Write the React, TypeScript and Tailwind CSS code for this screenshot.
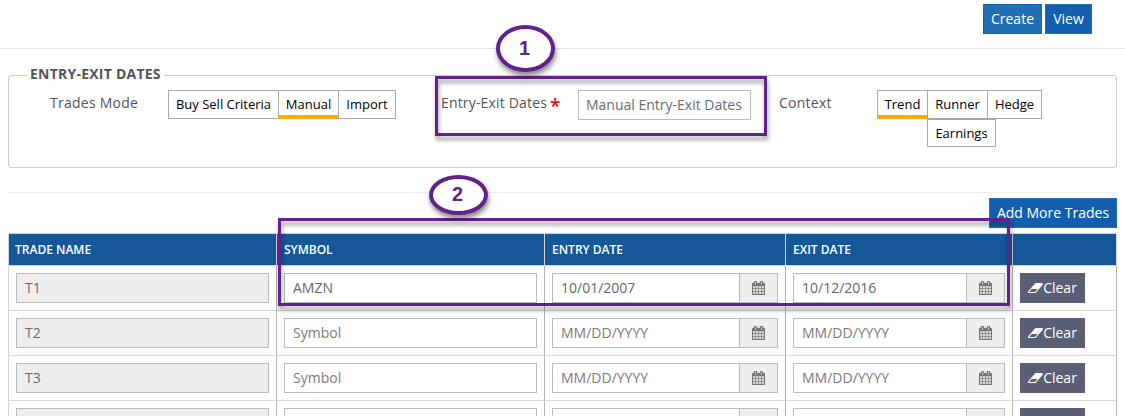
import React from "react";

function CalendarIcon() {
  return (
    <svg viewBox="0 0 1664 1792" className="h-[14px] w-[13px]" fill="#777777" stroke="#777777" strokeWidth="36">
      <path d="M128 1664h288v-288h-288v288zm352 0h320v-288h-320v288zm-352-352h288v-320h-288v320zm352 0h320v-320h-320v320zm-352-384h288v-288h-288v288zm736 736h320v-288h-320v288zm-384-736h320v-288h-320v288zm768 736h288v-288h-288v288zm-384-352h320v-320h-320v320zm-352-864v-288q0-13-9.5-22.5t-22.5-9.5h-64q-13 0-22.5 9.5t-9.5 22.5v288q0 13 9.5 22.5t22.5 9.5h64q13 0 22.5-9.5t9.5-22.5zm736 864h288v-320h-288v320zm-384-384h320v-288h-320v288zm384 0h288v-288h-288v288zm32-480v-288q0-13-9.5-22.5t-22.5-9.5h-64q-13 0-22.5 9.5t-9.5 22.5v288q0 13 9.5 22.5t22.5 9.5h64q13 0 22.5-9.5t9.5-22.5zm384-64v1280q0 52-38 90t-90 38h-1408q-52 0-90-38t-38-90v-1280q0-52 38-90t90-38h128v-96q0-66 47-113t113-47h64q66 0 113 47t47 113v96h384v-96q0-66 47-113t113-47h64q66 0 113 47t47 113v96h128q52 0 90 38t38 90z" />
    </svg>
  );
}

function EraserIcon() {
  return (
    <svg viewBox="0 0 1920 1792" className="h-[14px] w-[15px]" fill="#ffffff">
      <path d="M896 1408l336-384h-768l-336 384h768zm1013-1077q15 34 9.5 71.5t-30.5 65.5l-896 1024q-38 44-96 44h-768q-38 0-69.5-20.5t-47.5-54.5q-15-34-9.5-71.5t30.5-65.5l896-1024q38-44 96-44h768q38 0 69.5 20.5t47.5 54.5z" />
    </svg>
  );
}

function Segment({ label, active, className }: { label: string; active?: boolean; className: string }) {
  return (
    <button
      className={`flex shrink-0 justify-center whitespace-nowrap border border-[#a9a9a9] bg-white pt-[4px] text-[13px] leading-[19px] text-black ${
        active ? "border-b-4 border-b-[#ffab00]" : ""
      } ${className}`}
    >
      {label}
    </button>
  );
}

function DateField({ value, placeholder }: { value: string; placeholder: string }) {
  return (
    <div className="flex h-[30px] border border-[#bababa] bg-white">
      <span className={`flex-1 pl-2 leading-7 ${value ? "text-[#666]" : "text-[#7b7b7b]"}`}>
        {value || placeholder}
      </span>
      <span className="flex w-[38px] items-center justify-center border-l border-[#bababa] bg-[#eee]">
        <CalendarIcon />
      </span>
    </div>
  );
}

const rows = [
  { name: "T1", symbol: "AMZN", entry: "10/01/2007", exit: "10/12/2016" },
  { name: "T2", symbol: "", entry: "", exit: "" },
  { name: "T3", symbol: "", entry: "", exit: "" },
];

const columns = "grid grid-cols-[268px_268px_241px_227px_104px]";
const cell = "h-[45px] border-r border-b border-r-[#b0b2b5] border-b-[#d9d9d9] px-[7px] pt-[7px]";
const headers = ["TRADE NAME", "SYMBOL", "ENTRY DATE", "EXIT DATE", ""];

export default function App() {
  return (
    <div className="relative h-[416px] w-[1125px] overflow-hidden bg-white font-['Open_Sans',sans-serif] text-[14px] leading-5 text-[#555]">
      <header className="flex h-[49px] gap-[3px] border-b border-[#e5e5e5] pt-1 pl-[983px] text-white">
        <button className="h-[30px] w-[59px] border border-[#135fab] bg-[#1f6fb2]">Create</button>
        <button className="h-[30px] w-[47px] border border-[#1f6fb2] bg-[#135fae]">View</button>
      </header>

      <fieldset className="mt-4 ml-2 h-[103px] w-[1109px] rounded-[3px] border border-[#ccc]">
        <legend className="ml-[18px] h-[20px] w-[137px] pl-[3px] text-[14px] leading-[18px] font-bold tracking-[0.23px] whitespace-nowrap">
          ENTRY-EXIT DATES
        </legend>
        <div className="flex pt-[5px]">
          <div className="w-[159px] pt-[3px] pl-[41px] tracking-[0.25px]">Trades Mode</div>
          <div className="flex w-[273px]">
            <Segment label="Buy Sell Criteria" className="h-[29px] w-[111px]" />
            <Segment label="Manual" active className="-ml-px h-[29px] w-[61px]" />
            <Segment label="Import" className="-ml-px h-[29px] w-[58px]" />
          </div>
          <div className="flex w-[137px] pt-[3px] whitespace-nowrap">
            <span className="tracking-[0.17px]">Entry-Exit Dates</span>
            <span className="pt-[3px] pl-[3px] text-[19px] leading-5 font-semibold text-[#f00]">*</span>
          </div>
          <div className="h-[30px] w-[173px] border border-[#bababa] pl-[7px] leading-7 whitespace-nowrap text-[#6b6b6b]">
            Manual Entry-Exit Dates
          </div>
          <div className="w-[126px] pt-[3px] pl-[28px] tracking-[0.25px]">Context</div>
          <div>
            <div className="flex">
              <Segment label="Trend" active className="h-[29px] w-[51px]" />
              <Segment label="Runner" className="-ml-px h-[29px] w-[61px]" />
              <Segment label="Hedge" className="-ml-px h-[29px] w-[55px]" />
            </div>
            <div className="flex pl-[50px]">
              <Segment label="Earnings" className="h-[28px] w-[69px]" />
            </div>
          </div>
        </div>
      </fieldset>

      <div className="mt-6 ml-2 w-[1109px] border-t border-[#eee] pt-[5px]">
        <div className="flex h-[35px] justify-end">
          <button className="h-[30px] w-[128px] border border-[#1f6fb2] bg-[#135fae] whitespace-nowrap text-white">
            Add More Trades
          </button>
        </div>
        <div className="border-t border-l border-[#d5d5d5]">
          <div className={columns}>
            {headers.map((h, i) => (
              <div
                key={i}
                className={`h-8 border-r border-b border-[#d5d5d5] bg-[#155799] text-[12px] leading-[31px] font-semibold text-white ${
                  i === 0 ? "pl-[6px]" : "pl-[7px]"
                }`}
              >
                {h}
              </div>
            ))}
          </div>
          {rows.map((r) => (
            <div key={r.name} className={columns}>
              <div className={cell}>
                <div className="h-[30px] border border-[#bababa] bg-[#eee] pl-2 leading-7 text-[#6b6b6b]">
                  {r.name}
                </div>
              </div>
              <div className={cell}>
                <div className={`h-[30px] border border-[#bababa] pl-2 leading-7 ${r.symbol ? "text-[#666]" : "text-[#7b7b7b]"}`}>
                  {r.symbol || "Symbol"}
                </div>
              </div>
              <div className={cell}>
                <DateField value={r.entry} placeholder="MM/DD/YYYY" />
              </div>
              <div className={cell}>
                <DateField value={r.exit} placeholder="MM/DD/YYYY" />
              </div>
              <div className={cell}>
                <button className="flex h-[30px] w-[65px] items-center justify-center bg-[#5a5f75] text-white">
                  <EraserIcon />
                  Clear
                </button>
              </div>
            </div>
          ))}
          <div className={columns}>
            <div className={cell}>
              <div className="h-[30px] border border-[#bababa] bg-[#eee]" />
            </div>
            <div className={cell}>
              <div className="h-[30px] border border-[#bababa]" />
            </div>
            <div className={cell}>
              <DateField value="" placeholder="" />
            </div>
            <div className={cell}>
              <DateField value="" placeholder="" />
            </div>
            <div className={cell}>
              <div className="h-[30px] w-[65px] bg-[#5a5f75]" />
            </div>
          </div>
        </div>
      </div>

      <div className="absolute top-[76px] left-[435px] h-[60px] w-[332px] border-[3px] border-[#62218b] drop-shadow-[1px_4px_2px_rgba(0,0,0,0.4)]" />
      <div className="absolute top-[218px] left-[278px] h-[88px] w-[732px] border-[3px] border-[#62218b] drop-shadow-[1px_4px_2px_rgba(0,0,0,0.4)]" />
      <div className="absolute top-[25px] left-[496px] flex h-[47px] w-[59px] items-center justify-center rounded-[50%] border-4 border-[#62218b] bg-white pr-[2px] pb-[2px] font-['Liberation_Sans',sans-serif] text-[20px] font-bold text-[#62218b] shadow-[1px_4px_5px_rgba(0,0,0,0.45)]">
        1
      </div>
      <div className="absolute top-[175px] left-[429px] flex h-[40px] w-[59px] items-center justify-center rounded-[50%] border-4 border-[#62218b] bg-white pr-[2px] pb-[2px] font-['Liberation_Sans',sans-serif] text-[20px] font-bold text-[#62218b] shadow-[1px_4px_5px_rgba(0,0,0,0.45)]">
        2
      </div>
    </div>
  );
}
